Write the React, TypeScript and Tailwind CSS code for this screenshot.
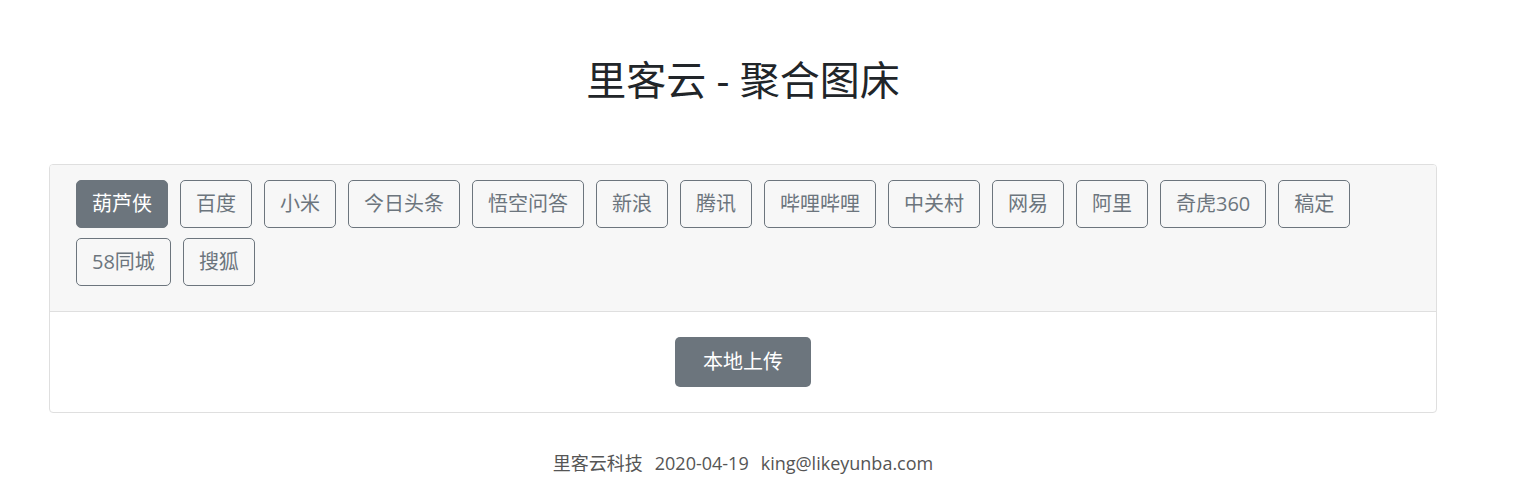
import { useState } from "react";

const HOSTS = [
  "葫芦侠",
  "百度",
  "小米",
  "今日头条",
  "悟空问答",
  "新浪",
  "腾讯",
  "哔哩哔哩",
  "中关村",
  "网易",
  "阿里",
  "奇虎360",
  "稿定",
  "58同城",
  "搜狐",
];

const FONT = "font-['Open_Sans','Noto_Sans_CJK_SC',sans-serif]";

export default function App() {
  const [active, setActive] = useState("葫芦侠");

  return (
    <div className={`w-[1486px] px-[49px] pt-[56px] bg-white text-[#212529] ${FONT}`}>
      {/* Title */}
      <h1 className="text-center text-[40px] leading-[48px] font-normal">
        里客云 - 聚合图床
      </h1>

      {/* Card */}
      <div className="mt-[60px] rounded border border-[#dfdfdf] overflow-hidden">
        <div className="bg-[#f7f7f7] border-b border-[#dfdfdf] pt-[15px] pb-[25px] px-[26px]">
          <div className="flex flex-wrap gap-x-3 gap-y-[10px]">
            {HOSTS.map((name) => (
              <button
                key={name}
                onClick={() => setActive(name)}
                className={
                  name === active
                    ? "h-[48px] px-[15px] rounded-[5px] border border-[#6c757d] bg-[#6c757d] text-white text-[20px] leading-[30px]"
                    : "h-[48px] px-[15px] rounded-[5px] border border-[#6c757d] text-[#6c757d] text-[20px] leading-[30px]"
                }
              >
                {name}
              </button>
            ))}
          </div>
        </div>
        <div className="flex justify-center py-[25px]">
          <button className="h-[50px] px-[28px] rounded-[5px] bg-[#6c757d] text-white text-[20px] leading-[30px]">
            本地上传
          </button>
        </div>
      </div>

      {/* Footer */}
      <div className="mt-[37px] flex justify-center gap-[12px] text-[18px] leading-[27px] text-[#555]">
        <span>里客云科技</span>
        <span>2020-04-19</span>
        <span>king@likeyunba.com</span>
      </div>
    </div>
  );
}
